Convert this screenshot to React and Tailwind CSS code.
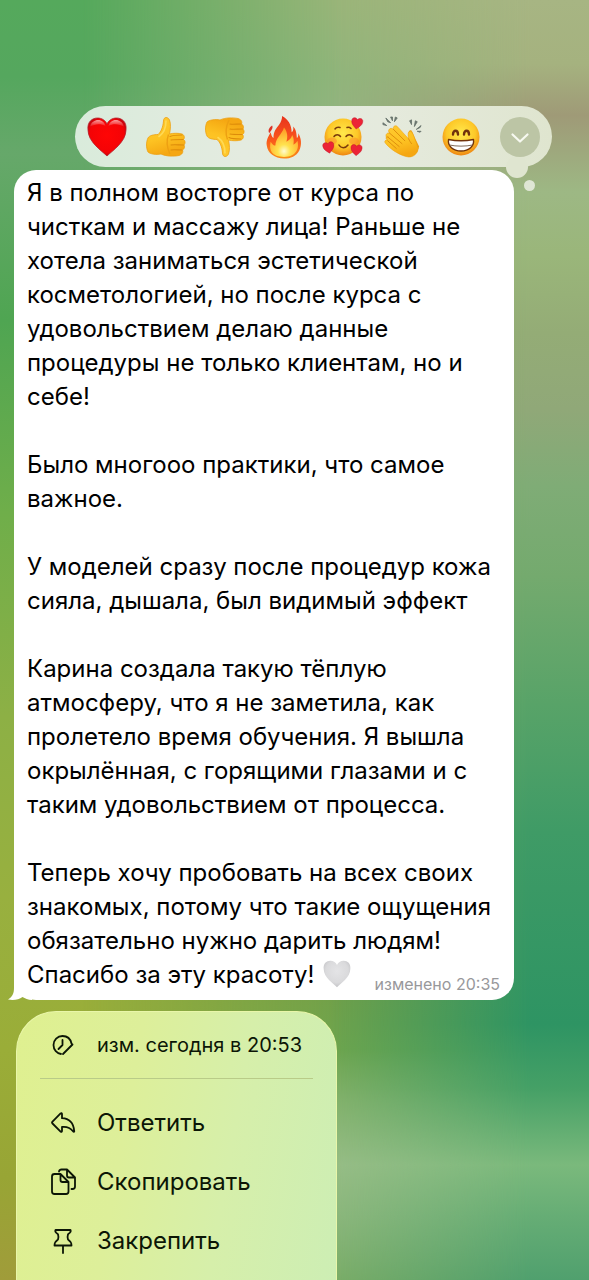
import React from "react";

const paragraphs = [
  "Я в полном восторге от курса по чисткам и массажу лица! Раньше не хотела заниматься эстетической косметологией, но после курса с удовольствием делаю данные процедуры не только клиентам, но и себе!",
  "Было многооо практики, что самое важное.",
  "У моделей сразу после процедур кожа сияла, дышала, был видимый эффект",
  "Карина создала такую тёплую атмосферу, что я не заметила, как пролетело время обучения. Я вышла окрылённая, с горящими глазами и с таким удовольствием от процесса.",
];

const HEART =
  "M20 39C15 34 1 25 1 13C0 5 5 1 10.500 1C15 1 18.500 3.500 20 7C21.500 3.500 25 1 29.500 1C35 1 40 5 39 13C39 25 25 34 20 39Z";

const HAND =
  "M2 21C3 18.500 8 17.500 12 17.500C15 15 17 10 17.500 4C17.500 -0.500 22 -0.500 23.500 3C25 7 24.500 12 23.500 17C27 16 33 16 36 17C38.500 18 39 21 37.500 22.500C39.500 23.500 39.500 26.500 38 28C39 29.500 38.500 32 36.500 33C37.500 35.500 36 37.500 33 38.500C28 39.500 20 39.500 15 37C10 38 4 37 2 35C0 31 0 25 2 21Z";

function Gradients() {
  return (
    <svg className="absolute size-0" aria-hidden="true">
      <defs>
        <linearGradient id="gold" x1="0" y1="0" x2="0.300" y2="1">
          <stop offset="0" stopColor="#ffca30" />
          <stop offset="0.600" stopColor="#fdc222" />
          <stop offset="1" stopColor="#f5a712" />
        </linearGradient>
        <radialGradient id="face" cx="0.500" cy="0.400" r="0.600">
          <stop offset="0" stopColor="#ffe94c" />
          <stop offset="0.650" stopColor="#fdc828" />
          <stop offset="1" stopColor="#ee8512" />
        </radialGradient>
        <radialGradient id="ruby" cx="0.500" cy="0.450" r="0.600">
          <stop offset="0" stopColor="#ff0505" />
          <stop offset="0.750" stopColor="#f40306" />
          <stop offset="1" stopColor="#b00510" />
        </radialGradient>
        <linearGradient id="flame" x1="0" y1="0" x2="0" y2="1">
          <stop offset="0" stopColor="#e8331c" />
          <stop offset="0.550" stopColor="#f9561d" />
          <stop offset="1" stopColor="#f98c17" />
        </linearGradient>
        <radialGradient id="ember" cx="0.500" cy="0.800" r="0.750">
          <stop offset="0" stopColor="#fffbd0" />
          <stop offset="0.300" stopColor="#ffe24e" />
          <stop offset="1" stopColor="#ff9a24" />
        </radialGradient>
        <linearGradient id="shine" x1="0" y1="0" x2="0" y2="1">
          <stop offset="0" stopColor="#ffffff" stopOpacity="0.600" />
          <stop offset="1" stopColor="#ffffff" stopOpacity="0" />
        </linearGradient>
        <radialGradient id="silver" cx="0.500" cy="0.400" r="0.600">
          <stop offset="0" stopColor="#e4e4e6" />
          <stop offset="0.700" stopColor="#dadadc" />
          <stop offset="1" stopColor="#c4c4c7" />
        </radialGradient>
      </defs>
    </svg>
  );
}

function RedHeart() {
  return (
    <svg viewBox="0 0 40 40" className="size-10">
      <path d={HEART} fill="url(#ruby)" stroke="#b5202c" strokeWidth="0.800" />
      <path d="M3 10C4 5 8 3 11 3C15 3 17.500 5.500 18.500 9C14 6.500 8 6.500 3 10ZM21.500 9C22.500 5.500 25 3 29 3C32 3 36 5 37 10C32 6.500 26 6.500 21.500 9Z" fill="url(#shine)" />
    </svg>
  );
}

function Thumb({ down }) {
  return (
    <svg viewBox="0 0 40 40" className={down ? "size-10 rotate-180 -scale-x-100" : "size-10"}>
      <path d={HAND} fill="url(#gold)" stroke="#eda012" strokeWidth="0.800" />
      <path d="M24 19.500C27 18 32 18 36 18M25 23C28 22.500 33 22.500 37 22.500M25 28C28 27.500 33 28 37.500 28M25 33C28 32.500 32 33 36 33" fill="none" stroke="#dd8c0a" strokeWidth="1.100" strokeLinecap="round" />
      <path d="M22.500 17.500C20.500 23 21 31 24 37" fill="none" stroke="#eda012" strokeWidth="1.400" />
      <path d="M20 4C20 11 18 16 13 19.500" fill="none" stroke="#ffe26a" strokeWidth="1.600" strokeLinecap="round" opacity="0.700" />
    </svg>
  );
}

function Fire() {
  return (
    <svg viewBox="0 0 40 46" className="h-11 w-10">
      <path d="M18 1C24 4 28 10 28 18C30 17 30 14 29.500 12C33 15 33 20 33.500 24C35 23 35 21 35 19C38 24 39 31 36 37C33 43 27 45.500 20 45.500C10 45.500 3 40 2 32C1 26 4 22 6 18C7 21 7 23 9 24C9 17 12 14 15 10C17 7 18 4 18 1Z" fill="url(#flame)" />
      <path d="M7.500 11C9 13 7 16 4.500 19C3 16.500 4 13.500 7.500 11Z" fill="#dc3327" />
      <path d="M20 13C24 18 24 23 22.500 28C26 26 28 24 28.500 21C31 25 30 29 30 31C32 30 33 29 34 27C36 34 34 43.500 20 44C7 43.500 4 37 6 28C8 31 9 32 11 32C11 24 18 20 20 13Z" fill="url(#ember)" />
    </svg>
  );
}

function Loved() {
  return (
    <svg viewBox="0 0 42 40" className="h-10 w-[42px] shrink-0">
      <circle cx="21" cy="20" r="18.500" fill="url(#face)" />
      <ellipse cx="10" cy="24" rx="5" ry="3.500" fill="#f9792b" opacity="0.400" />
      <ellipse cx="32" cy="24" rx="5" ry="3.500" fill="#f9792b" opacity="0.400" />
      <path d="M12 19.500C13.500 17 17 17 18.500 19.500M24 19.500C25.500 17 29 17 30.500 19.500M17 28C19 31.500 23.500 31.500 26 28M13 12C14 10.500 16 10 18 10.500M25 10.500C26.500 10 28 10.500 29 11.500" fill="none" stroke="#7a3a0b" strokeWidth="1.500" strokeLinecap="round" />
      <g fill="#ec2336" stroke="#bd1228" strokeWidth="1.500">
        <path transform="translate(30 0) rotate(8) scale(0.290)" d={HEART} />
        <path transform="translate(0 26) rotate(-10) scale(0.290)" d={HEART} />
        <path transform="translate(29 27) rotate(4) scale(0.290)" d={HEART} />
      </g>
    </svg>
  );
}

function Clap() {
  return (
    <svg viewBox="0 0 42 44" className="h-11 w-10">
      <path d="M1 7L5 10L1 9ZM4 2L9 7L6 6ZM9 1L11 1L11 5ZM14 1L16 2L13 6ZM29 5L31 4L31 9ZM35 5L37 6L34 11ZM36 14L41 10L40 12ZM37 16L41 16L40 17Z" fill="#68746d" stroke="#68746d" strokeWidth="0.900" strokeLinejoin="round" />
      <path d="M28 19C27 15 31 13 32 17C34 22 37 28 39 32L37 38L29 43Z" fill="#eda015" />
      <path d="M5 23C3 20 5 17 8 18C5 15 9 11 12 14C11 10 15 9 17 12L28 24C27 20 27 16 30 16C33 17 34 24 36 28L38 34C37 40 33 43 28 43C20 42 10 36 4 29C2 27 3 25 6 25C3 24 4 21 7 22Z" fill="url(#gold)" stroke="#eda012" strokeWidth="0.600" />
      <path d="M6 22L18 32M8 18L21 29M12 14L24 26M6 26L15 34" stroke="#dc8c0c" strokeWidth="1" strokeLinecap="round" />
      <path d="M28 24C29 26 30 28 31 29" fill="none" stroke="#dc8c0c" strokeWidth="1" strokeLinecap="round" />
    </svg>
  );
}

function Grin() {
  return (
    <svg viewBox="0 0 40 40" className="size-10">
      <circle cx="20" cy="20" r="18.500" fill="url(#face)" />
      <path d="M12 17.500C12 12.500 17 12.500 17 17.500M23 17.500C23 12.500 28 12.500 28 17.500" fill="none" stroke="#70320c" strokeWidth="2.400" strokeLinecap="round" />
      <path d="M7.500 22.500C15 24 25 24 32.500 22.500C33.500 29 28 34 20 34C12 34 6.500 29 7.500 22.500Z" fill="#ffffff" stroke="#70320c" strokeWidth="1.400" strokeLinejoin="round" />
      <path d="M8.500 28C15 29.500 25 29.500 31.500 28" fill="none" stroke="#806a58" strokeWidth="1" />
    </svg>
  );
}

const reactions = [
  { label: "Сердце", icon: <RedHeart /> },
  { label: "Нравится", icon: <Thumb /> },
  { label: "Не нравится", icon: <Thumb down /> },
  { label: "Огонь", icon: <Fire /> },
  { label: "Обожаю", icon: <Loved /> },
  { label: "Аплодисменты", icon: <Clap /> },
  { label: "Улыбка", icon: <Grin /> },
];

function Line({ children }) {
  return (
    <svg viewBox="0 0 28 28" className="size-7 shrink-0" fill="none" stroke="currentColor" strokeWidth="1.800" strokeLinecap="round" strokeLinejoin="round" aria-hidden="true">
      {children}
    </svg>
  );
}

const actions = [
  {
    label: "Ответить",
    icon: <path d="M13 5C13 4 12.300 3.800 11.600 4.400L3.500 12.700C2.800 13.400 2.800 13.800 3.500 14.500L11.600 22.600C12.300 23.200 13 23 13 22V18C18 17.500 21.500 19 24 22.300C24.700 23.200 25.500 23 25.200 22C24.500 14.500 20.500 9.500 13 9.200Z" />,
  },
  {
    label: "Скопировать",
    icon: (
      <>
        <path d="M11.500 6H5.500C4 6 3 7 3 8.500V23.500C3 25 4 26 5.500 26H17C18.500 26 19.500 25 19.500 23.500V14L11.500 6V12C11.500 13.300 12.200 14 13.500 14H19.500" />
        <path d="M10 3.500C10.300 2.200 11 1.500 12.500 1.500H18L26 9.500V18.500C26 20 25 21 23.500 21H22.500M18 1.500V7.500C18 8.800 18.700 9.500 20 9.500H26" />
      </>
    ),
  },
  {
    label: "Закрепить",
    icon: <path d="M6.500 3H21.500C22.500 5 21 6 19 7.200C18.300 9.500 18.300 10.500 19 12.500C21 13.800 22.500 15.500 22.500 18.500H5.500C5.500 15.500 7 13.800 9 12.500C9.700 10.500 9.700 9.500 9 7.200C7 6 5.500 5 6.500 3ZM14 18.500V26" />,
  },
];

function Backdrop() {
  return (
    <div className="absolute inset-0 -z-10" aria-hidden="true">
      <div className="absolute inset-0 bg-[linear-gradient(#55a95c_0%,#55a75e_6%,#66a86a_12%,#4fa552_25%,#6fae4a_40%,#8db045_56%,#98b03f_70%,#9aad38_82%,#98a535_92%,#a09c3a_100%)]" />
      <div className="absolute inset-0 bg-[linear-gradient(#9ab579_0%,#90b57b_6%,#95b581_10%,#80a868_40%,#6ca35c_70%,#70a04a_78%,#6ea54e_82%,#84b26c_86%,#97bd86_91%,#8cb77c_95%,#7bad68_100%)] [mask-image:linear-gradient(to_right,transparent_14%,black_58%)]" />
      <div className="absolute inset-0 bg-[linear-gradient(#a7b583_0%,#a5b27f_5%,#9f9a77_9%,#9db884_15%,#9ab67a_20%,#94ac76_26%,#90a878_32%,#7fac76_38%,#74aa6e_45%,#58a368_55%,#3f9b66_65%,#2e9463_80%,#45a066_85%,#7ab97c_91%,#66ad75_95%,#50a06e_100%)] [mask-image:linear-gradient(to_right,transparent_56%,black_90%)]" />
    </div>
  );
}

export default function App() {
  return (
    <main className="relative isolate flex min-h-screen flex-col overflow-hidden pt-[106px] font-['Inter',sans-serif] text-black">
      <Backdrop />
      <Gradients />

      <div className="relative mr-[37px] ml-[75px] flex h-[61px] items-center justify-between rounded-full bg-[linear-gradient(to_right,#d9ebdb,#e4ebe0_35%,#e5eadd_65%,#dfe5cf)] px-3" role="toolbar" aria-label="Реакции">
        <span className="absolute right-6 -bottom-[11px] size-[22px] rounded-full bg-[#dfe5d0]" />
        <span className="absolute right-[17px] -bottom-6 size-[11px] rounded-full bg-[#dfe6d5]" />
        {reactions.map((r) => (
          <button key={r.label} type="button" aria-label={r.label} className="relative flex size-10 items-center justify-center">
            {r.icon}
          </button>
        ))}
        <button type="button" aria-label="Ещё реакции" className="relative flex size-10 items-center justify-center rounded-full bg-[#bcc5a5]">
          <svg viewBox="0 0 40 40" className="size-10" fill="none" stroke="#f7f9f0" strokeWidth="2.200" strokeLinecap="round" strokeLinejoin="round">
            <path d="M12.500 17.500L20 24.500L27.500 17.500" />
          </svg>
        </button>
      </div>

      <article className="relative mt-[3px] mr-[75px] ml-[14px] rounded-[22px] bg-white px-[13px] pt-[6px] pb-2">
        <svg viewBox="0 0 24 24" className="absolute bottom-0 -left-1.5 size-6" fill="#ffffff" aria-hidden="true">
          <path d="M6 0V12C6 18 4 21 0 23.500C6 24.500 11 23.500 14.500 21C17 22.500 20 24 24 24V0Z" />
        </svg>
        <div className="relative flex flex-col gap-[34px] text-2xl">
          {paragraphs.map((text) => (
            <p key={text} className="leading-[34px]">{text}</p>
          ))}
          <p className="leading-[34px]">
            Теперь хочу пробовать на всех своих знакомых, потому что такие ощущения обязательно нужно дарить людям! Спасибо за эту красоту!{" "}
            <svg viewBox="0 0 40 40" className="ml-0.5 inline-block size-7 align-[-5px]" role="img" aria-label="Белое сердце">
              <path d={HEART} fill="url(#silver)" />
            </svg>
          </p>
        </div>
        <p className="absolute right-[14px] bottom-[6px] text-base leading-5 text-[#98989b]">изменено 20:35</p>
      </article>

      <nav className="mt-[11px] ml-4 flex w-[321px] flex-1 flex-col rounded-t-[40px] border-x border-t border-[#e9f6a9] bg-[linear-gradient(100deg,#dff090_0%,#ddef9a_35%,#d6efaa_65%,#cdeeb4_100%)] pb-2 text-[#0c1606]">
        <div className="flex h-[66px] items-center gap-5 pl-8 text-xl">
          <Line>
            <path d="M12 23C8 22.500 4.500 19 4.500 14C4.500 9 8.500 5 13.500 5C18 5 21.500 8 22.500 12.500M13.500 9V14L9.500 18M14 23L23.500 13.500" />
          </Line>
          <span>изм. сегодня в 20:53</span>
        </div>
        <hr className="mx-[23px] mb-[14px] border-[#b9cb88]" />
        {actions.map((a) => (
          <button key={a.label} type="button" className="flex h-[59px] items-center gap-5 pl-8 text-left text-2xl">
            <Line>{a.icon}</Line>
            <span>{a.label}</span>
          </button>
        ))}
      </nav>
    </main>
  );
}
